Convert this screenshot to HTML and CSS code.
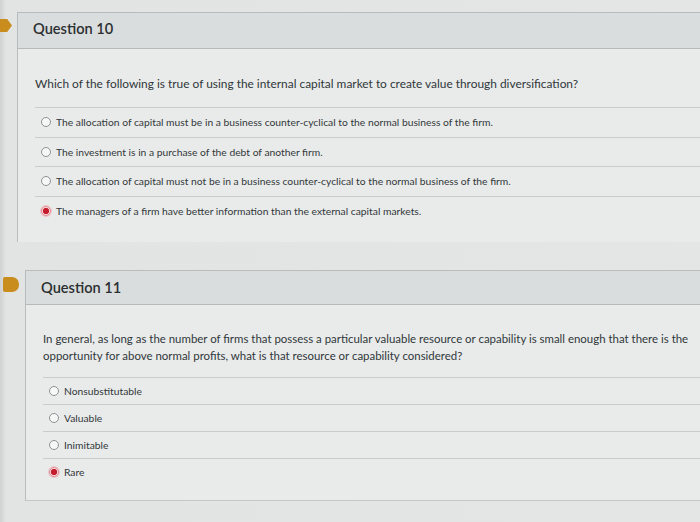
FILE: index.html
```html
<!DOCTYPE html>
<html>
<head>
<meta charset="utf-8">
<link rel="stylesheet" href="styles.css">
</head>
<body>
<div class="page">
  <section class="question q10">
    <span class="marker m10"></span>
    <div class="card">
      <header class="qhead"><h2>Question 10</h2></header>
      <div class="qbody">
        <p class="prompt">Which of the following is true of using the internal capital market to create value through diversification?</p>
        <ul class="answers">
          <li><span class="radio"></span>The allocation of capital must be in a business counter-cyclical to the normal business of the firm.</li>
          <li><span class="radio"></span>The investment is in a purchase of the debt of another firm.</li>
          <li><span class="radio"></span>The allocation of capital must not be in a business counter-cyclical to the normal business of the firm.</li>
          <li><span class="radio checked"></span>The managers of a firm have better information than the external capital markets.</li>
        </ul>
      </div>
    </div>
  </section>

  <section class="question q11">
    <span class="marker m11"></span>
    <div class="card">
      <header class="qhead"><h2>Question 11</h2></header>
      <div class="qbody">
        <p class="prompt">In general, as long as the number of firms that possess a particular valuable resource or capability is small enough that there is the opportunity for above normal profits, what is that resource or capability considered?</p>
        <ul class="answers">
          <li><span class="radio"></span>Nonsubstitutable</li>
          <li><span class="radio"></span>Valuable</li>
          <li><span class="radio"></span>Inimitable</li>
          <li><span class="radio checked"></span>Rare</li>
        </ul>
      </div>
    </div>
  </section>
</div>
</body>
</html>
```

FILE: styles.css
```css
* { box-sizing: border-box; }
html, body {
  margin: 0;
  padding: 0;
  width: 700px;
  height: 522px;
  overflow: hidden;
}
body {
  background: linear-gradient(90deg, #cfd1d1 0px, #e2e4e4 6px, #e4e6e5 100%);
  font-family: Lato, "Liberation Sans", sans-serif;
  color: #2d3b45;
}
.page {
  display: flex;
  flex-direction: column;
  gap: 28px;
  padding-top: 12px;
}
.question {
  position: relative;
}
.q10 { padding-left: 17px; }
.q11 { padding-left: 25px; }

.marker {
  position: absolute;
  background: #c98d1e;
}
.m10 {
  left: 0;
  top: 7px;
  width: 12px;
  height: 13px;
  clip-path: polygon(0 0, 60% 0, 100% 50%, 60% 100%, 0 100%);
  border-radius: 0 3px 3px 0;
}
.m11 {
  left: 3px;
  top: 7px;
  width: 16px;
  height: 15px;
  border-radius: 2px 7px 7px 2px;
}

.card {
  width: 700px;
  border-left: 1px solid #b9bcbc;
  border-top: 1px solid #b9bcbc;
}
.q11 .card {
  border-bottom: 1px solid #c4c7c7;
}
.qhead {
  background: #dadddd;
  border-bottom: 1px solid #b6b9b9;
  display: flex;
  align-items: center;
}
.q10 .qhead { height: 36px; padding: 0 0 4px 15px; }
.q11 .qhead { height: 34px; padding: 0 0 1px 15px; }
.qhead h2 {
  margin: 0;
  font-size: 14.6px;
  font-weight: 600;
  color: #2b2f31;
}
.qbody {
  background: #e9ebea;
}
.q10 .qbody {
  padding: 26px 0 17px 17px;
}
.q11 .qbody {
  padding: 25px 0 15px 17px;
}
.prompt {
  margin: 0;
  font-size: 11.9px;
  line-height: 17px;
  color: #30373a;
}
.q10 .prompt { margin-bottom: 15px; }
.q11 .prompt { width: 660px; font-size: 11.45px; margin-bottom: 13px; }

.answers {
  list-style: none;
  margin: 0;
  padding: 0;
}
.answers li {
  display: flex;
  align-items: center;
  gap: 5px;
  border-top: 1px solid #c9cccc;
  font-size: 10.3px;
  color: #33383b;
}
.q10 .answers li { height: 29.5px; padding-left: 6px; }
.q11 .answers li { height: 27px; padding-left: 6px; }

.radio {
  width: 10px;
  height: 10px;
  border-radius: 50%;
  border: 1px solid #8d9294;
  background: #f6f7f7;
  flex: none;
}
.radio.checked {
  border: 1px solid #e28a92;
  background: radial-gradient(circle, #c41c2c 0 2.8px, #f4d7d9 3.4px);
  box-shadow: 0 0 0 1px #f0c2c6;
}
```
